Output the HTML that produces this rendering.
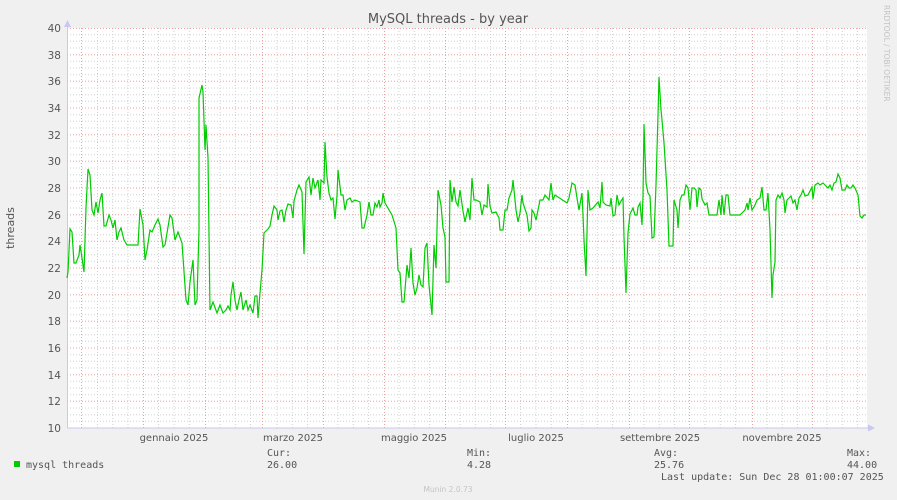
<!DOCTYPE html>
<html><head><meta charset="utf-8"><style>
html,body{margin:0;padding:0;background:#f0f0f0;}
svg{display:block;}
</style></head><body>
<svg width="897" height="500" xmlns="http://www.w3.org/2000/svg">
<rect width="897" height="500" fill="#f0f0f0"/>
<rect x="67" y="28" width="800" height="400" fill="#ffffff"/>
<g stroke="#d0d0d0" stroke-width="1" stroke-dasharray="1,2">
<path d="M67 34.7H867M67 41.3H867M67 48H867M67 61.3H867M67 68H867M67 74.7H867M67 88H867M67 94.7H867M67 101.3H867M67 114.7H867M67 121.3H867M67 128H867M67 141.3H867M67 148H867M67 154.7H867M67 168H867M67 174.7H867M67 181.3H867M67 194.7H867M67 201.3H867M67 208H867M67 221.3H867M67 228H867M67 234.7H867M67 248H867M67 254.7H867M67 261.3H867M67 274.7H867M67 281.3H867M67 288H867M67 301.3H867M67 308H867M67 314.7H867M67 328H867M67 334.7H867M67 341.3H867M67 354.7H867M67 361.3H867M67 368H867M67 381.3H867M67 388H867M67 394.7H867M67 408H867M67 414.7H867M67 421.3H867"/>
<path d="M97.5 28V428M112.8 28V428M128 28V428M158.5 28V428M174 28V428M189.3 28V428M220 28V428M235.3 28V428M250.5 28V428M277 28V428M292.3 28V428M307.6 28V428M338 28V428M353.3 28V428M368.6 28V428M399 28V428M414.3 28V428M429.6 28V428M460 28V428M475.3 28V428M490.6 28V428M520.6 28V428M536 28V428M551.3 28V428M582 28V428M597.3 28V428M612.6 28V428M644 28V428M659.3 28V428M674.6 28V428M705 28V428M720.3 28V428M735.6 28V428M767 28V428M782.3 28V428M797.6 28V428M827 28V428M842.3 28V428M857.6 28V428"/>
</g>
<g stroke="#e8a0a0" stroke-width="1" stroke-dasharray="1,2">
<path d="M67 28.5H867M67 54.7H867M67 81.3H867M67 108H867M67 134.7H867M67 161.3H867M67 188H867M67 214.7H867M67 241.3H867M67 268H867M67 294.7H867M67 321.3H867M67 348H867M67 374.7H867M67 401.3H867"/>
<path d="M81.5 28V428M143.5 28V428M205.5 28V428M262.5 28V428M323.5 28V428M384.5 28V428M445.5 28V428M505.5 28V428M567.5 28V428M629.5 28V428M689.5 28V428M752.5 28V428M812.5 28V428"/>
</g>
<path d="M67.5 428V24M67.5 428H871" stroke="#c8c8f0" stroke-width="1" fill="none"/>
<path d="M64 27L67.5 20L71 27Z" fill="#c8c8f0"/>
<path d="M868 424.5L875 428L868 431.5Z" fill="#c8c8f0"/>
<g font-family="'DejaVu Sans','Liberation Sans',sans-serif" font-size="10.5" fill="#555" text-anchor="end">
<text x="61" y="32">40</text><text x="61" y="59">38</text><text x="61" y="85">36</text><text x="61" y="112">34</text><text x="61" y="139">32</text><text x="61" y="165">30</text><text x="61" y="192">28</text><text x="61" y="219">26</text><text x="61" y="245">24</text><text x="61" y="272">22</text><text x="61" y="299">20</text><text x="61" y="325">18</text><text x="61" y="352">16</text><text x="61" y="379">14</text><text x="61" y="405">12</text><text x="61" y="432">10</text>
</g>
<g font-family="'DejaVu Sans','Liberation Sans',sans-serif" font-size="10" fill="#555" text-anchor="middle">
<text x="174" y="441">gennaio 2025</text><text x="293" y="441">marzo 2025</text><text x="414" y="441">maggio 2025</text><text x="536" y="441">luglio 2025</text><text x="660" y="441">settembre 2025</text><text x="782" y="441">novembre 2025</text>
</g>
<text x="448" y="23" font-family="'DejaVu Sans','Liberation Sans',sans-serif" font-size="13" fill="#555" text-anchor="middle">MySQL threads - by year</text>
<text transform="translate(14,228) rotate(-90)" font-family="'DejaVu Sans','Liberation Sans',sans-serif" font-size="11" fill="#555" text-anchor="middle">threads</text>
<text transform="translate(884,5) rotate(90)" font-family="'DejaVu Sans','Liberation Sans',sans-serif" font-size="7.5" fill="#c4c4c4">RRDTOOL / TOBI OETIKER</text>
<polyline fill="none" stroke="#00cc00" stroke-width="1.2" stroke-linejoin="miter" points="67,278 68,272 70,229 72,232 74,263 76,263 79,255 80,245 82,258 84,272 86,208 88,169 90,175 92,210 94,215 96,202 98,213 100,200 102,193 104,226 106,226 109,215 111,220 113,228 115,220 117,240 119,232 121,228 124,240 127,245 138,245 140,209 143,225 145,260 147,250 150,230 152,232 155,225 158,219 160,225 163,247 165,245 170,215 172,218 175,240 178,232 182,243 186,300 188,305 190,282 193,260 195,305 197,300 199,229 199,98 202,85 203,92 205,150 206,125 208,158 210,310 213,302 217,313 220,305 223,313 226,310 228,306 230,310 231,295 233,282 235,300 237,310 239,300 241,292 243,310 246,300 248,310 250,305 253,313 255,296 257,296 258,318 260,293 262,270 264,233 268,229 270,226 272,215 274,206 277,210 278,220 280,211 282,210 284,222 286,210 288,204 291,205 293,218 294,201 297,190 299,185 302,192 304,254 306,182 309,177 311,195 313,178 315,188 318,180 320,200 321,180 324,183 325,142 327,177 329,193 331,200 333,198 335,219 337,196 338,170 341,195 343,195 345,210 347,200 350,198 352,202 355,200 360,202 361,215 362,228 364,228 367,215 369,202 371,215 373,215 375,203 377,207 379,200 380,207 382,203 383,193 385,203 392,215 396,228 398,270 400,273 402,302 404,302 407,265 409,278 411,248 413,283 415,295 417,288 419,275 421,285 423,287 425,248 427,243 429,285 432,315 434,245 436,268 438,190 441,205 443,228 445,237 446,282 449,282 450,180 452,202 454,187 456,202 458,206 460,190 463,211 465,222 468,208 470,220 472,178 474,200 476,200 480,202 482,215 484,205 487,207 488,184 490,206 492,213 496,212 499,218 500,230 503,230 505,210 507,210 509,198 512,190 513,180 516,210 518,222 520,213 522,195 523,203 527,215 529,231 531,228 532,210 534,213 536,220 538,210 540,200 543,200 545,195 549,200 551,183 553,200 555,195 567,203 569,198 572,183 575,185 577,198 579,210 582,193 583,215 584,240 586,276 588,190 590,210 593,208 598,202 600,208 602,182 603,202 606,205 610,206 611,198 613,216 615,215 617,195 619,205 621,201 623,198 624,237 626,293 628,233 630,214 633,208 635,215 637,215 638,207 640,203 642,225 643,196 644,124 646,183 648,193 650,196 652,238 654,237 656,185 658,115 659,77 661,110 662,120 664,143 667,190 669,246 673,246 674,200 677,210 678,228 680,200 682,195 684,195 686,185 688,188 690,210 692,188 694,188 696,190 697,207 699,188 701,190 702,199 705,205 707,203 709,215 717,215 719,200 721,215 722,195 724,215 726,195 728,195 730,215 740,215 745,210 747,203 748,210 750,198 752,210 755,205 757,200 760,198 762,187 764,210 766,210 768,193 770,230 772,298 773,275 775,262 776,200 778,195 780,198 782,193 784,200 785,213 787,200 789,198 791,196 793,203 795,200 797,210 799,198 801,195 803,190 805,196 808,195 812,187 813,199 815,185 818,183 820,185 823,183 828,188 830,185 832,190 834,183 836,182 838,174 840,178 842,190 845,190 847,185 849,188 851,188 853,185 855,188 858,195 860,216 862,218 864,215 866,215"/>
<rect x="14" y="461" width="6" height="6" fill="#00cc00"/>
<g font-family="'DejaVu Sans Mono','Liberation Mono',monospace" font-size="10" fill="#555">
<text x="26" y="468">mysql threads</text>
<text x="267" y="456">Cur:</text><text x="267" y="468">26.00</text>
<text x="467" y="456">Min:</text><text x="467" y="468">4.28</text>
<text x="654" y="456">Avg:</text><text x="654" y="468">25.76</text>
<text x="847" y="456">Max:</text><text x="847" y="468">44.00</text>
<text x="661" y="480">Last update: Sun Dec 28 01:00:07 2025</text>
</g>
<text x="448" y="492" font-family="'DejaVu Sans','Liberation Sans',sans-serif" font-size="7.5" fill="#c4c4c4" text-anchor="middle">Munin 2.0.73</text>
</svg>
</body></html>
